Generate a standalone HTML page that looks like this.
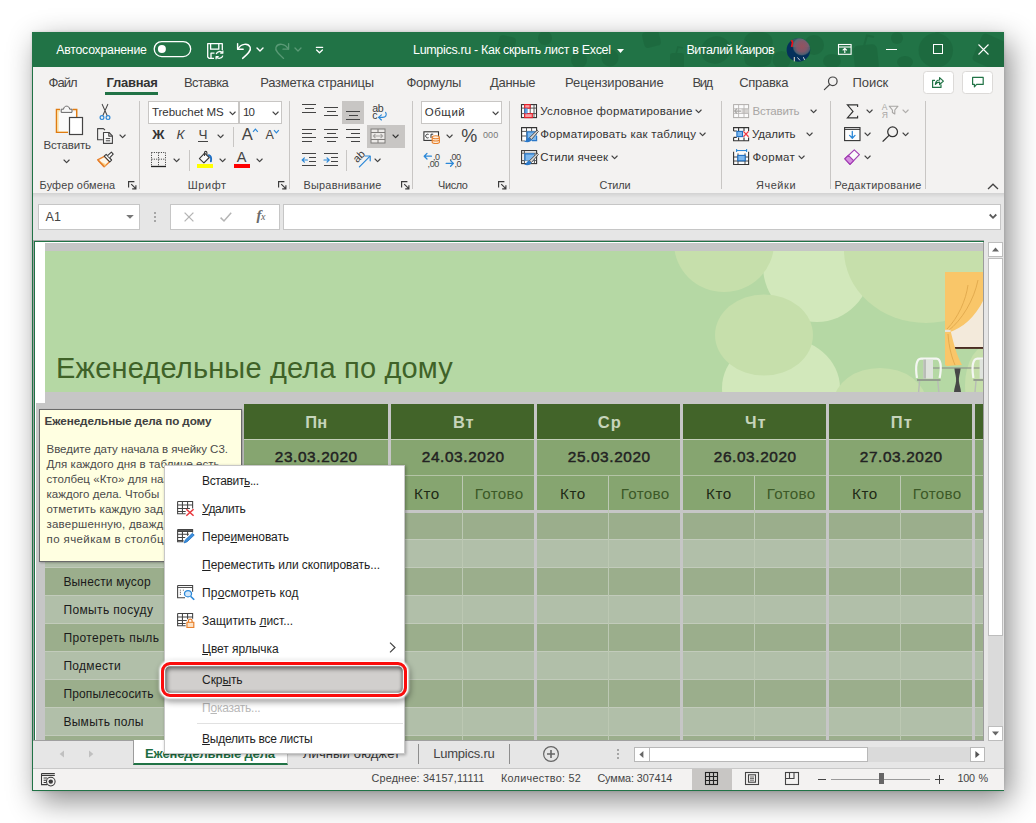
<!DOCTYPE html>
<html><head><meta charset="utf-8"><title>Excel</title>
<style>
html,body{margin:0;padding:0;}
body{width:1036px;height:823px;background:#fff;overflow:hidden;position:relative;font-family:"Liberation Sans",sans-serif;}
.a{position:absolute;box-sizing:border-box;margin:0;padding:0;}
u{text-decoration:underline;text-underline-offset:1px;}
</style></head><body>
<div class="a " style="left:32px;top:32px;width:972px;height:759px;background:#f3f2f1;box-shadow:6px 10px 28px rgba(0,0,0,.46),0 0 3px rgba(0,0,0,.14);"></div>
<div class="a " style="left:32px;top:32px;width:972px;height:35px;background:#217346;"></div>
<div class="a " style="left:33px;top:67px;width:971px;height:126px;background:#f3f2f1;"></div>
<div class="a " style="left:33px;top:193px;width:971px;height:48px;background:#e6e6e6;"></div>
<div class="a " style="left:33px;top:193px;width:971px;height:5px;background:linear-gradient(#d2d2d2,#e6e6e6);"></div>
<div class="a " style="left:33px;top:241px;width:971px;height:499px;background:#e6e6e6;"></div>
<div class="a " style="left:33px;top:740px;width:971px;height:28px;background:#e6e6e6;"></div>
<div class="a " style="left:33px;top:768px;width:971px;height:22px;background:#f3f2f1;border-top:1px solid #c8c8c8;"></div>
<div class="a " style="left:32px;top:67px;width:1px;height:724px;background:#217346;"></div>
<div class="a " style="left:32px;top:790px;width:972px;height:1px;background:#217346;"></div>
<svg class="a" style="left:32px;top:32px;" width="972" height="35" viewBox="0 0 972 35"><g fill="#1b663c" opacity=".62" transform="translate(-32 -32)">
<circle cx="935.8" cy="50.3" r="17.2"/><path d="M936 34 C938 31 942 30.5 944 32" stroke="#1b663c" stroke-width="2.5" fill="none"/>
<rect x="976" y="38" width="34" height="30" rx="4" transform="rotate(24 993 53)"/>
<rect x="854" y="45" width="24" height="26" rx="5" transform="rotate(-6 866 58)"/><path d="M864 46 L867 35.5 L874 37" stroke="#1b663c" stroke-width="2" fill="none"/>
<circle cx="814" cy="45" r="10"/><ellipse cx="832" cy="61" rx="9" ry="7"/>
<rect x="643" y="31" width="17" height="16" rx="4" transform="rotate(-14 651 39)"/>
<circle cx="610" cy="58" r="8.5"/><rect x="670" y="53" width="14" height="16" rx="3"/><path d="M676 54 L678 47 L683 48" stroke="#1b663c" stroke-width="1.6" fill="none"/>
<ellipse cx="715.7" cy="50" rx="15" ry="13.5" transform="rotate(-20 715.7 50)"/>
<path d="M744 46 C742 36 750 31 758 32 C768 31 775 37 772 46 C771 52 773 60 770 64 C764 68 750 68 746 64 C743 60 745 52 744 46 Z"/>
<circle cx="781.6" cy="60" r="9"/>
<rect x="498" y="36" width="17" height="17" rx="4" transform="rotate(12 506 45)"/><circle cx="579" cy="60" r="8"/>
<circle cx="545" cy="38" r="7"/>
<circle cx="897" cy="38" r="6"/><ellipse cx="905" cy="62" rx="8" ry="6"/>
</g></svg>
<div class="a" style="left:56.3px;top:44.39px;font-size:12.3px;line-height:1;color:#fff;white-space:nowrap;letter-spacing:-0.244px;">Автосохранение</div>
<svg class="a" style="left:152px;top:39px;" width="42" height="20" viewBox="0 0 42 20"><rect x="2.2" y="2.6" width="36.5" height="15" rx="7.5" fill="none" stroke="#fff" stroke-width="1.3"/><circle cx="9.9" cy="10.1" r="4" fill="#fff"/></svg>
<svg class="a" style="left:205px;top:41px;" width="20" height="20" viewBox="0 0 20 20"><g fill="none" stroke="#fff" stroke-width="1.3" stroke-linejoin="round">
<path d="M9 17.3 H4 L2.7 16 V2.7 H17.3 V9"/><path d="M5.6 2.7 V8.2 H13.8 V2.7"/><path d="M6 17 V12.2 H9.5"/>
<path d="M11.2 13.2 A3.6 3.6 0 0 1 17.6 12"/><path d="M17.8 14.6 A3.6 3.6 0 0 1 11.4 15.8"/>
<path d="M17.8 9.6 V12.2 H15.2"/><path d="M11.1 18.3 V15.7 H13.7"/></g></svg>
<svg class="a" style="left:235px;top:41px;" width="20" height="20" viewBox="0 0 20 20"><g fill="none" stroke="#fff" stroke-width="1.4" stroke-linecap="round" stroke-linejoin="round"><path d="M2.6 2.6 V8.2 H8.2"/><path d="M2.9 8 C6 2.6 13 1.6 15.2 6.2 C16.4 9.2 13.5 12.2 7.6 17.4"/></g></svg>
<svg class="a" style="left:255.5px;top:47.1px;" width="8" height="5" viewBox="0 0 8 5"><path d="M1 1 L4.0 4 L7 1" fill="none" stroke="#fff" stroke-width="1.4" stroke-linecap="round" stroke-linejoin="round"/></svg>
<svg class="a" style="left:272px;top:41px;" width="20" height="20" viewBox="0 0 20 20"><g fill="none" stroke="#5a9a76" stroke-width="1.3" stroke-linecap="round" stroke-linejoin="round"><path d="M16.6 2.6 V8.2 H11"/><path d="M16.3 8 C13.2 2.6 6.2 1.6 4 6.2 C2.8 9.2 5.7 12.2 11.6 17.4"/></g></svg>
<svg class="a" style="left:293.6px;top:47.1px;" width="8" height="5" viewBox="0 0 8 5"><path d="M1 1 L4.0 4 L7 1" fill="none" stroke="#5a9a76" stroke-width="1.3" stroke-linecap="round" stroke-linejoin="round"/></svg>
<svg class="a" style="left:314px;top:44px;" width="12" height="12" viewBox="0 0 12 12"><g fill="none" stroke="#fff" stroke-width="1.3" stroke-linecap="round" stroke-linejoin="round"><path d="M2.4 3.4 H8.6"/><path d="M2.6 6 L5.5 8.8 L8.4 6"/></g></svg>
<div class="a" style="left:413px;top:44.22px;font-size:12.5px;line-height:1;color:#fff;white-space:nowrap;letter-spacing:-0.320px;">Lumpics.ru - Как скрыть лист в Excel</div>
<svg class="a" style="left:616px;top:47.6px;" width="9" height="6" viewBox="0 0 9 6"><path d="M1 1 H8 L4.5 5 Z" fill="#fff"/></svg>
<div class="a" style="left:686.4px;top:44.22px;font-size:12.5px;line-height:1;color:#fff;white-space:nowrap;letter-spacing:-0.473px;">Виталий Каиров</div>
<svg class="a" style="left:786px;top:37px;" width="26" height="26" viewBox="0 0 26 26"><defs><radialGradient id="av" cx=".5" cy=".5" r=".5"><stop offset="0" stop-color="#94525e"/><stop offset=".55" stop-color="#85596a" stop-opacity=".95"/><stop offset=".85" stop-color="#6f6f78" stop-opacity=".7"/><stop offset="1" stop-color="#5e7a72" stop-opacity="0"/></radialGradient>
<clipPath id="avc"><circle cx="12.4" cy="13" r="11.8"/></clipPath></defs>
<circle cx="12.4" cy="13" r="11.8" fill="#04305b"/>
<g clip-path="url(#avc)"><path d="M6 0 H26 V10 H6 Z" fill="#5f8070" opacity=".55"/><circle cx="15.9" cy="9.4" r="9.6" fill="url(#av)"/></g>
<path d="M5.4 3.2 L6.6 5.4 L5.6 10" stroke="#f01018" stroke-width="1.7" fill="none"/>
<path d="M8.3 20 V24.4" stroke="#e8e2c8" stroke-width="1"/><path d="M11.4 20.4 L14 23.4" stroke="#c8d0dc" stroke-width="1"/><path d="M17.4 20.2 L18.6 23" stroke="#c8d0dc" stroke-width="1"/></svg>
<svg class="a" style="left:837px;top:43px;" width="16" height="13" viewBox="0 0 16 13"><g fill="none" stroke="#fff" stroke-width="1.1"><rect x="1.5" y="1.5" width="12.6" height="9.8"/><path d="M1.5 4 H14.1"/><path d="M7.8 10 V5.4 M5.7 7.4 L7.8 5.3 L9.9 7.4"/></g></svg>
<div class="a " style="left:886px;top:49px;width:11px;height:1px;background:#fff;"></div>
<div class="a " style="left:933px;top:44px;width:10px;height:10px;border:1px solid #fff;"></div>
<svg class="a" style="left:977px;top:43px;" width="13" height="13" viewBox="0 0 13 13"><path d="M1.5 1.5 L11.5 11.5 M11.5 1.5 L1.5 11.5" stroke="#fff" stroke-width="1.1"/></svg>
<div class="a" style="left:48.5px;top:75.80px;font-size:13px;line-height:1;color:#444;white-space:nowrap;letter-spacing:-0.954px;">Файл</div>
<div class="a" style="left:106.4px;top:75.80px;font-size:13px;line-height:1;color:#333;white-space:nowrap;letter-spacing:-0.228px;font-weight:bold;">Главная</div>
<div class="a " style="left:105px;top:92px;width:53px;height:3px;background:#217346;"></div>
<div class="a" style="left:184px;top:75.80px;font-size:13px;line-height:1;color:#444;white-space:nowrap;letter-spacing:-0.587px;">Вставка</div>
<div class="a" style="left:260.3px;top:75.80px;font-size:13px;line-height:1;color:#444;white-space:nowrap;letter-spacing:-0.265px;">Разметка страницы</div>
<div class="a" style="left:406.4px;top:75.80px;font-size:13px;line-height:1;color:#444;white-space:nowrap;letter-spacing:-0.262px;">Формулы</div>
<div class="a" style="left:490px;top:75.80px;font-size:13px;line-height:1;color:#444;white-space:nowrap;letter-spacing:-0.294px;">Данные</div>
<div class="a" style="left:565.1px;top:75.80px;font-size:13px;line-height:1;color:#444;white-space:nowrap;letter-spacing:-0.137px;">Рецензирование</div>
<div class="a" style="left:692.4px;top:75.80px;font-size:13px;line-height:1;color:#444;white-space:nowrap;letter-spacing:-1.409px;">Вид</div>
<div class="a" style="left:739.3px;top:75.80px;font-size:13px;line-height:1;color:#444;white-space:nowrap;letter-spacing:-0.316px;">Справка</div>
<svg class="a" style="left:822px;top:75px;" width="18" height="16" viewBox="0 0 18 16"><g fill="none" stroke="#444" stroke-width="1.2" stroke-linecap="round"><circle cx="10.8" cy="6.3" r="4.3"/><path d="M7.7 9.5 L2.4 14.6"/></g></svg>
<div class="a" style="left:852.6px;top:76.10px;font-size:13px;line-height:1;color:#444;white-space:nowrap;letter-spacing:-0.081px;">Поиск</div>
<div class="a " style="left:922.5px;top:70.5px;width:31px;height:23px;background:#fff;border:1px solid #dcdad8;border-radius:3.5px;"></div>
<div class="a " style="left:962.2px;top:70.5px;width:31px;height:23px;background:#fff;border:1px solid #dcdad8;border-radius:3.5px;"></div>
<svg class="a" style="left:930px;top:75px;" width="16" height="14" viewBox="0 0 16 14"><g fill="none" stroke="#217346" stroke-width="1.2" stroke-linejoin="round"><path d="M5 5.3 H2.6 V12.4 H11 V9.6"/><path d="M5.4 9.4 C5.6 6.6 7.3 5 9.6 5 V2.6 L13.4 6.1 L9.6 9.5 V7.2 C7.6 7.2 6.4 7.9 5.4 9.4 Z"/></g></svg>
<svg class="a" style="left:970px;top:75px;" width="16" height="14" viewBox="0 0 16 14"><path d="M2.6 2.4 H13.2 V9.4 H6.6 L4.4 11.9 V9.4 H2.6 Z" fill="none" stroke="#217346" stroke-width="1.2" stroke-linejoin="round"/></svg>
<svg class="a" style="left:54px;top:103px;" width="32" height="34" viewBox="0 0 32 34"><path d="M6 6.4 H2.5 V29.3 H14" fill="#fbfbfb" stroke="#e07c12" stroke-width="1.5"/><path d="M6 7.9 H4 V27.8 H14" fill="none" stroke="#fbdc92" stroke-width="1.3"/>
<path d="M18.5 6.4 H22.7 V14" fill="none" stroke="#e07c12" stroke-width="1.5"/>
<rect x="4.8" y="8.6" width="17" height="19.6" fill="#fbfbfb"/>
<path d="M7.2 9.4 V6.2 H9.6 C9.6 2.2 15.6 2.2 15.6 6.2 H18 V9.4 Z" fill="#f7f7f7" stroke="#666" stroke-width="1"/>
<rect x="15.5" y="14.5" width="13" height="17" fill="#fff" stroke="#444" stroke-width="1.2"/></svg>
<div class="a" style="left:43.4px;top:140.17px;font-size:11.5px;line-height:1;color:#444;white-space:nowrap;letter-spacing:-0.164px;">Вставить</div>
<svg class="a" style="left:62.800000000000004px;top:159.15px;" width="7.2" height="4.7" viewBox="0 0 7.2 4.7"><path d="M1 1 L3.6 3.7 L6.2 1" fill="none" stroke="#444" stroke-width="1.15" stroke-linecap="round" stroke-linejoin="round"/></svg>
<svg class="a" style="left:97px;top:103px;" width="16" height="18" viewBox="0 0 16 18"><g fill="none" stroke-linecap="round"><path d="M5.2 1.4 L10.2 12.6 M10.8 1.4 L5.8 12.6" stroke="#444" stroke-width="1.1"/>
<circle cx="5" cy="14.6" r="1.9" stroke="#2b88d8" stroke-width="1.2"/><circle cx="11" cy="14.6" r="1.9" stroke="#2b88d8" stroke-width="1.2"/></g></svg>
<svg class="a" style="left:96px;top:127px;" width="18" height="18" viewBox="0 0 18 18"><g fill="none" stroke="#444" stroke-width="1.1" stroke-linejoin="round"><path d="M6.8 12.8 H1.6 V1.6 H7.4 L9 3.2"/>
<path d="M7.5 5.5 H13 L16.4 8.9 V16.4 H7.5 Z" fill="#f9f9f9"/><path d="M12.8 5.6 V9.1 H16.3"/><path d="M9.8 11.6 H14.2 M9.8 13.8 H14.2" stroke-width="1"/></g></svg>
<svg class="a" style="left:118.9px;top:133.85px;" width="7.2" height="4.7" viewBox="0 0 7.2 4.7"><path d="M1 1 L3.6 3.7 L6.2 1" fill="none" stroke="#444" stroke-width="1.15" stroke-linecap="round" stroke-linejoin="round"/></svg>
<svg class="a" style="left:95px;top:150px;" width="20" height="19" viewBox="0 0 20 19"><g stroke-linejoin="round"><path d="M2.6 9.8 L9.4 6.4 L14.6 11.8 L9.2 16.8 Z" fill="#fdf6ea" stroke="#e8812d" stroke-width="1.3"/>
<path d="M5.4 11.6 L11.4 14.6 L9.2 16.4 Z" fill="#fbd488"/><path d="M3.2 10.2 L9.2 16.6" stroke="#e8812d" stroke-width="1.6" fill="none"/>
<path d="M9.2 6.2 L11.2 4.4 L16.6 10 L14.8 11.8 Z" fill="#fbfbfb" stroke="#3a3a3a" stroke-width="1.1"/>
<path d="M12.6 5.6 L16.4 2.2 L18.2 4.2 L14.6 7.8" fill="#fbfbfb" stroke="#3a3a3a" stroke-width="1.1"/></g></svg>
<div class="a" style="left:39.6px;top:179.57px;font-size:10.9px;line-height:1;color:#444;white-space:nowrap;letter-spacing:0.139px;">Буфер обмена</div>
<svg class="a" style="left:128px;top:180.9px;" width="9" height="9" viewBox="0 0 9 9"><g fill="none" stroke="#3a3a3a" stroke-width="1.15"><path d="M.6 6.4 V.6 H6.4"/><path d="M3.2 3.2 L7.6 7.4 M7.9 4.2 V7.9 H4.2"/></g></svg>
<div class="a " style="left:139px;top:101px;width:1px;height:88px;background:#c8c6c4;"></div>
<div class="a " style="left:148px;top:101px;width:91px;height:23px;background:#fff;border:1px solid #c8c6c4;"></div>
<div class="a " style="left:239px;top:101px;width:43px;height:23px;background:#fff;border:1px solid #c8c6c4;border-left:1px solid #c8c6c4;"></div>
<div class="a" style="left:151.9px;top:106.57px;font-size:11.5px;line-height:1;color:#333;white-space:nowrap;letter-spacing:0.000px;">Trebuchet MS</div>
<svg class="a" style="left:228.9px;top:111.05000000000001px;" width="7.2" height="4.7" viewBox="0 0 7.2 4.7"><path d="M1 1 L3.6 3.7 L6.2 1" fill="none" stroke="#444" stroke-width="1.15" stroke-linecap="round" stroke-linejoin="round"/></svg>
<div class="a" style="left:243px;top:106.57px;font-size:11.5px;line-height:1;color:#333;white-space:nowrap;letter-spacing:-0.992px;">10</div>
<svg class="a" style="left:271.9px;top:111.05000000000001px;" width="7.2" height="4.7" viewBox="0 0 7.2 4.7"><path d="M1 1 L3.6 3.7 L6.2 1" fill="none" stroke="#444" stroke-width="1.15" stroke-linecap="round" stroke-linejoin="round"/></svg>
<div class="a" style="left:152.2px;top:128.37px;font-size:13.5px;line-height:1;color:#333;white-space:nowrap;letter-spacing:1.398px;font-weight:bold;">Ж</div>
<div class="a" style="left:176.4px;top:128.37px;font-size:13.5px;line-height:1;color:#444;white-space:nowrap;letter-spacing:0.643px;font-style:italic;">К</div>
<div class="a" style="left:198.5px;top:128.37px;font-size:13.5px;line-height:1;color:#444;white-space:nowrap;letter-spacing:-0.798px;">Ч</div>
<div class="a " style="left:198px;top:141px;width:9.5px;height:1px;background:#444;"></div>
<svg class="a" style="left:216.70000000000002px;top:134.05px;" width="7.2" height="4.7" viewBox="0 0 7.2 4.7"><path d="M1 1 L3.6 3.7 L6.2 1" fill="none" stroke="#444" stroke-width="1.15" stroke-linecap="round" stroke-linejoin="round"/></svg>
<div class="a " style="left:233px;top:126.5px;width:1px;height:20.5px;background:#c8c6c4;"></div>
<div class="a" style="left:241.8px;top:125.93px;font-size:16.5px;line-height:1;color:#444;white-space:nowrap;letter-spacing:0.194px;">A</div>
<svg class="a" style="left:251.5px;top:128px;" width="7" height="5" viewBox="0 0 7 5"><path d="M1 3.8 L3.4 1.2 L5.8 3.8" fill="none" stroke="#2b88d8" stroke-width="1.2"/></svg>
<div class="a" style="left:265.4px;top:129.32px;font-size:12.5px;line-height:1;color:#444;white-space:nowrap;letter-spacing:0.262px;">A</div>
<svg class="a" style="left:273px;top:128.5px;" width="7" height="5" viewBox="0 0 7 5"><path d="M1 1.2 L3.4 3.8 L5.8 1.2" fill="none" stroke="#2b88d8" stroke-width="1.2"/></svg>
<svg class="a" style="left:150px;top:151px;" width="17" height="17" viewBox="0 0 17 17"><g stroke="#333" stroke-width="1" stroke-dasharray="1 1.35" fill="none"><path d="M1.5 1.5 H15.5 M1.5 1.5 V15 M15.5 1.5 V15 M8.5 1.5 V15 M1.5 8.2 H15.5"/></g><path d="M1 15.5 H16" stroke="#222" stroke-width="1.3"/></svg>
<svg class="a" style="left:172.70000000000002px;top:158.15px;" width="7.2" height="4.7" viewBox="0 0 7.2 4.7"><path d="M1 1 L3.6 3.7 L6.2 1" fill="none" stroke="#444" stroke-width="1.15" stroke-linecap="round" stroke-linejoin="round"/></svg>
<div class="a " style="left:189px;top:150px;width:1px;height:20.5px;background:#c8c6c4;"></div>
<svg class="a" style="left:197px;top:150px;" width="18" height="15" viewBox="0 0 18 15"><g fill="none" stroke-linejoin="round"><path d="M2.4 8.7 L7.6 3.2 L12.3 7.5 L6.9 12.9 Z" fill="#fbfbfb" stroke="#3a3a3a" stroke-width="1.1"/>
<path d="M7.5 6 V2.8 C7.5 .9 9.9 .9 9.9 2.8 V5.2" stroke="#3a3a3a" stroke-width="1.1"/>
<path d="M11.8 5.2 C13.8 6 14.5 8.6 13.9 11.4" stroke="#1f6fc3" stroke-width="1.9" stroke-linecap="round"/></g></svg>
<div class="a " style="left:197px;top:164px;width:16px;height:4px;background:#ffff00;"></div>
<svg class="a" style="left:218.6px;top:158.15px;" width="7.2" height="4.7" viewBox="0 0 7.2 4.7"><path d="M1 1 L3.6 3.7 L6.2 1" fill="none" stroke="#444" stroke-width="1.15" stroke-linecap="round" stroke-linejoin="round"/></svg>
<div class="a" style="left:236.8px;top:150.33px;font-size:14.5px;line-height:1;color:#444;white-space:nowrap;letter-spacing:1.228px;">A</div>
<div class="a " style="left:234px;top:164px;width:16px;height:4px;background:#ff0000;"></div>
<svg class="a" style="left:255.89999999999998px;top:158.15px;" width="7.2" height="4.7" viewBox="0 0 7.2 4.7"><path d="M1 1 L3.6 3.7 L6.2 1" fill="none" stroke="#444" stroke-width="1.15" stroke-linecap="round" stroke-linejoin="round"/></svg>
<div class="a" style="left:187.7px;top:179.57px;font-size:10.9px;line-height:1;color:#444;white-space:nowrap;letter-spacing:0.610px;">Шрифт</div>
<svg class="a" style="left:277.8px;top:180.9px;" width="9" height="9" viewBox="0 0 9 9"><g fill="none" stroke="#3a3a3a" stroke-width="1.15"><path d="M.6 6.4 V.6 H6.4"/><path d="M3.2 3.2 L7.6 7.4 M7.9 4.2 V7.9 H4.2"/></g></svg>
<div class="a " style="left:289px;top:101px;width:1px;height:88px;background:#c8c6c4;"></div>
<div class="a " style="left:302px;top:104.05px;width:14px;height:1.1px;background:#444;"></div>
<div class="a " style="left:304.5px;top:107.95px;width:9px;height:1.1px;background:#444;"></div>
<div class="a " style="left:302px;top:111.85000000000001px;width:14px;height:1.1px;background:#444;"></div>
<div class="a " style="left:324px;top:106.85000000000001px;width:14px;height:1.1px;background:#444;"></div>
<div class="a " style="left:326.5px;top:110.75px;width:9px;height:1.1px;background:#444;"></div>
<div class="a " style="left:324px;top:114.65px;width:14px;height:1.1px;background:#444;"></div>
<div class="a " style="left:342px;top:101px;width:22px;height:23px;background:#c8c6c4;"></div>
<div class="a " style="left:346px;top:110.75px;width:14px;height:1.1px;background:#444;"></div>
<div class="a " style="left:348.5px;top:114.65px;width:9px;height:1.1px;background:#444;"></div>
<div class="a " style="left:346px;top:118.65px;width:14px;height:1.1px;background:#444;"></div>
<div class="a" style="left:372.2px;top:102.63px;font-size:10.6px;line-height:1;color:#3a3a3a;white-space:nowrap;letter-spacing:-0.391px;">ab</div>
<div class="a" style="left:372.2px;top:110.03px;font-size:10.6px;line-height:1;color:#3a3a3a;white-space:nowrap;">c</div>
<svg class="a" style="left:377px;top:111px;" width="11" height="10" viewBox="0 0 11 10"><g fill="none" stroke="#2b88d8" stroke-width="1.15" stroke-linecap="round" stroke-linejoin="round"><path d="M8.6 1.4 C10.2 4 8.8 6.4 5.6 6.4 H1.8"/><path d="M4.4 3.8 L1.6 6.4 L4.4 9"/></g></svg>
<div class="a " style="left:302px;top:128.75px;width:14px;height:1.1px;background:#444;"></div>
<div class="a " style="left:324px;top:128.75px;width:14px;height:1.1px;background:#444;"></div>
<div class="a " style="left:346px;top:128.75px;width:14px;height:1.1px;background:#444;"></div>
<div class="a " style="left:302px;top:132.75px;width:9.5px;height:1.1px;background:#444;"></div>
<div class="a " style="left:326.5px;top:132.75px;width:9px;height:1.1px;background:#444;"></div>
<div class="a " style="left:350.5px;top:132.75px;width:9.5px;height:1.1px;background:#444;"></div>
<div class="a " style="left:302px;top:136.64999999999998px;width:14px;height:1.1px;background:#444;"></div>
<div class="a " style="left:324px;top:136.64999999999998px;width:14px;height:1.1px;background:#444;"></div>
<div class="a " style="left:346px;top:136.64999999999998px;width:14px;height:1.1px;background:#444;"></div>
<div class="a " style="left:302px;top:140.64999999999998px;width:9.5px;height:1.1px;background:#444;"></div>
<div class="a " style="left:326.5px;top:140.64999999999998px;width:9px;height:1.1px;background:#444;"></div>
<div class="a " style="left:350.5px;top:140.64999999999998px;width:9.5px;height:1.1px;background:#444;"></div>
<div class="a " style="left:367px;top:125px;width:38px;height:23px;background:#c8c6c4;"></div>
<svg class="a" style="left:369.5px;top:127.5px;" width="16" height="16" viewBox="0 0 16 16"><g fill="none" stroke="#7e7c7a" stroke-width="1"><rect x="1" y="1" width="14" height="14" fill="#ebe9e7"/><path d="M1 4.5 H15 M1 11.5 H15 M8 1 V4.5 M8 11.5 V15"/>
<path d="M3.4 8 H12.6 M5.4 6 L3.4 8 L5.4 10 M10.6 6 L12.6 8 L10.6 10" stroke="#a8a6a4" stroke-width="1.1"/></g></svg>
<svg class="a" style="left:391.7px;top:134.25px;" width="7.2" height="4.7" viewBox="0 0 7.2 4.7"><path d="M1 1 L3.6 3.7 L6.2 1" fill="none" stroke="#333" stroke-width="1.15" stroke-linecap="round" stroke-linejoin="round"/></svg>
<div class="a " style="left:302px;top:152.85px;width:14px;height:1.1px;background:#444;"></div>
<div class="a " style="left:309px;top:156.95px;width:7px;height:1.1px;background:#444;"></div>
<div class="a " style="left:309px;top:161.04999999999998px;width:7px;height:1.1px;background:#444;"></div>
<div class="a " style="left:302px;top:165.14999999999998px;width:14px;height:1.1px;background:#444;"></div>
<div class="a " style="left:324px;top:152.85px;width:14px;height:1.1px;background:#444;"></div>
<div class="a " style="left:331px;top:156.95px;width:7px;height:1.1px;background:#444;"></div>
<div class="a " style="left:331px;top:161.04999999999998px;width:7px;height:1.1px;background:#444;"></div>
<div class="a " style="left:324px;top:165.14999999999998px;width:14px;height:1.1px;background:#444;"></div>
<svg class="a" style="left:301px;top:155.5px;" width="8" height="8" viewBox="0 0 8 8"><g fill="none" stroke="#2b88d8" stroke-width="1.2" stroke-linecap="round" stroke-linejoin="round"><path d="M1.4 4 H6.4 M3.4 1.8 L1.2 4 L3.4 6.2"/></g></svg>
<svg class="a" style="left:323px;top:155.5px;" width="8" height="8" viewBox="0 0 8 8"><g fill="none" stroke="#2b88d8" stroke-width="1.2" stroke-linecap="round" stroke-linejoin="round"><path d="M1 4 H6 M4 1.8 L6.2 4 L4 6.2"/></g></svg>
<div class="a " style="left:346px;top:150px;width:1px;height:20.5px;background:#c8c6c4;"></div>
<div class="a" style="left:353.4px;top:151.2px;font-size:11px;line-height:1;color:#3a3a3a;transform:rotate(-45deg);transform-origin:50% 50%;letter-spacing:-.2px;">ab</div>
<svg class="a" style="left:358px;top:153px;" width="14" height="15" viewBox="0 0 14 15"><g fill="none" stroke="#2b88d8" stroke-width="1.2" stroke-linecap="round" stroke-linejoin="round"><path d="M1.4 13.8 L11.8 3.4"/><path d="M7.4 3 L12.2 3 L12.2 7.8"/></g></svg>
<svg class="a" style="left:374.0px;top:158.15px;" width="7.2" height="4.7" viewBox="0 0 7.2 4.7"><path d="M1 1 L3.6 3.7 L6.2 1" fill="none" stroke="#444" stroke-width="1.15" stroke-linecap="round" stroke-linejoin="round"/></svg>
<div class="a" style="left:303.4px;top:179.57px;font-size:10.9px;line-height:1;color:#444;white-space:nowrap;letter-spacing:0.270px;">Выравнивание</div>
<svg class="a" style="left:401px;top:180.9px;" width="9" height="9" viewBox="0 0 9 9"><g fill="none" stroke="#3a3a3a" stroke-width="1.15"><path d="M.6 6.4 V.6 H6.4"/><path d="M3.2 3.2 L7.6 7.4 M7.9 4.2 V7.9 H4.2"/></g></svg>
<div class="a " style="left:412px;top:101px;width:1px;height:88px;background:#c8c6c4;"></div>
<div class="a " style="left:421px;top:101px;width:81px;height:23px;background:#fff;border:1px solid #c8c6c4;"></div>
<div class="a" style="left:424.7px;top:106.57px;font-size:11.5px;line-height:1;color:#333;white-space:nowrap;letter-spacing:0.565px;">Общий</div>
<svg class="a" style="left:492.0px;top:111.05000000000001px;" width="7.2" height="4.7" viewBox="0 0 7.2 4.7"><path d="M1 1 L3.6 3.7 L6.2 1" fill="none" stroke="#444" stroke-width="1.15" stroke-linecap="round" stroke-linejoin="round"/></svg>
<svg class="a" style="left:422px;top:130px;" width="20" height="15" viewBox="0 0 20 15"><rect x="1.9" y="1.8" width="14.6" height="8.6" fill="#fdfdfd" stroke="#333" stroke-width="1.1"/>
<path d="M6.6 4.4 C4.6 3.6 3.6 5 3.7 6.1 C3.8 7.6 5.2 8.4 6.6 7.7" fill="none" stroke="#333" stroke-width="1"/><path d="M9 8 V4.2 H11.2" fill="none" stroke="#333" stroke-width="1"/>
<g fill="#fdf1e1" stroke="#e8812d" stroke-width="1.1"><path d="M10.2 7.2 V12.2 C10.2 13.9 17.4 13.9 17.4 12.2 V7.2"/><ellipse cx="13.8" cy="7.2" rx="3.6" ry="1.5"/><path d="M10.2 9.8 C10.2 11.4 17.4 11.4 17.4 9.8" fill="none"/></g></svg>
<svg class="a" style="left:445.79999999999995px;top:134.05px;" width="7.2" height="4.7" viewBox="0 0 7.2 4.7"><path d="M1 1 L3.6 3.7 L6.2 1" fill="none" stroke="#444" stroke-width="1.15" stroke-linecap="round" stroke-linejoin="round"/></svg>
<div class="a" style="left:461.3px;top:127.36px;font-size:18px;line-height:1;color:#444;white-space:nowrap;letter-spacing:-0.605px;">%</div>
<div class="a" style="left:482.9px;top:131.38px;font-size:9px;line-height:1;color:#777;white-space:nowrap;letter-spacing:0.192px;">000</div>
<svg class="a" style="left:422px;top:150px;" width="20" height="19" viewBox="0 0 20 19"><g fill="none" stroke="#2b88d8" stroke-width="1.3" stroke-linecap="round" stroke-linejoin="round"><path d="M2.2 6.2 H9.4 M5 3.4 L2.2 6.2 L5 9"/></g></svg>
<div class="a" style="left:433px;top:152.58px;font-size:9px;line-height:1;color:#444;white-space:nowrap;letter-spacing:-.4px;">,0</div>
<div class="a" style="left:427.6px;top:159.78px;font-size:9px;line-height:1;color:#444;white-space:nowrap;letter-spacing:-.4px;">,00</div>
<svg class="a" style="left:444px;top:150px;" width="20" height="19" viewBox="0 0 20 19"><g fill="none" stroke="#2b88d8" stroke-width="1.3" stroke-linecap="round" stroke-linejoin="round"><path d="M2.2 13.4 H9.4 M6.6 10.6 L9.4 13.4 L6.6 16.2"/></g></svg>
<div class="a" style="left:449.4px;top:152.58px;font-size:9px;line-height:1;color:#444;white-space:nowrap;letter-spacing:-.4px;">,00</div>
<div class="a" style="left:454.4px;top:159.78px;font-size:9px;line-height:1;color:#444;white-space:nowrap;letter-spacing:-.4px;">,0</div>
<div class="a" style="left:438.1px;top:179.57px;font-size:10.9px;line-height:1;color:#444;white-space:nowrap;letter-spacing:-0.387px;">Число</div>
<svg class="a" style="left:498px;top:180.9px;" width="9" height="9" viewBox="0 0 9 9"><g fill="none" stroke="#3a3a3a" stroke-width="1.15"><path d="M.6 6.4 V.6 H6.4"/><path d="M3.2 3.2 L7.6 7.4 M7.9 4.2 V7.9 H4.2"/></g></svg>
<div class="a " style="left:509px;top:101px;width:1px;height:88px;background:#c8c6c4;"></div>
<svg class="a" style="left:520px;top:103px;" width="18" height="16" viewBox="0 0 18 16"><rect x="1.5" y="1.6" width="15" height="13" fill="#fff" stroke="#333" stroke-width="1.1"/>
<path d="M1.5 5.1 H16.5 M1.5 10.6 H16.5 M4.6 1.6 V14.6 M10.2 1.6 V14.6 M14 1.6 V14.6" stroke="#444" stroke-width=".9" fill="none"/>
<rect x="4.7" y="1.6" width="5.4" height="3.5" fill="#f6a0a6" stroke="#e8202a" stroke-width="1.1"/>
<rect x="4.7" y="10.6" width="7.6" height="4" fill="#f6a0a6" stroke="#e8202a" stroke-width="1.1"/>
<rect x="4.5" y="5.4" width="3" height="5" fill="#2b7cd3"/><rect x="5.6" y="5.6" width="1" height="4.8" fill="#8cc0f0"/></svg>
<div class="a" style="left:540.3px;top:106.07px;font-size:11.5px;line-height:1;color:#333;white-space:nowrap;letter-spacing:0.259px;">Условное форматирование</div>
<svg class="a" style="left:695.1px;top:109.05000000000001px;" width="7.2" height="4.7" viewBox="0 0 7.2 4.7"><path d="M1 1 L3.6 3.7 L6.2 1" fill="none" stroke="#444" stroke-width="1.15" stroke-linecap="round" stroke-linejoin="round"/></svg>
<svg class="a" style="left:520px;top:125.8px;" width="20" height="18" viewBox="0 0 20 18"><path d="M16.6 1.6 H1.6 V14.6 H5" fill="#fff" stroke="#333" stroke-width="1.1"/><rect x="1.6" y="1.6" width="15" height="13" fill="#fff"/>
<path d="M1.6 1.6 H16.6 V6 M1.6 1.6 V14.6" fill="none" stroke="#333" stroke-width="1.1"/>
<path d="M1.6 5.4 H16.6 M1.6 10 H6.5 M6.5 1.6 V14.6 M11.6 1.6 V5.4" stroke="#444" stroke-width=".9" fill="none"/>
<rect x="6.6" y="5.4" width="10.4" height="9.6" fill="#7db8ee"/><path d="M7.2 14.4 V6 H16.4" fill="none" stroke="#2b78c8" stroke-width="1.2"/><path d="M12 14.6 H16.6 V10" fill="none" stroke="#2b78c8" stroke-width="1.2"/><path d="M17.2 4.2 L9.4 11.8 L11.4 13.6 L18.4 5.4 Z" fill="#dcdad8" stroke="#444" stroke-width=".9" stroke-linejoin="round"/>
<path d="M9.2 11.8 C6.8 11.6 7.2 14.4 4 15.6 C8 17 11 15.8 11.5 13.7 Z" fill="#2b78c8"/></svg>
<div class="a" style="left:540.3px;top:129.17px;font-size:11.5px;line-height:1;color:#333;white-space:nowrap;letter-spacing:0.249px;">Форматировать как таблицу</div>
<svg class="a" style="left:698.8px;top:132.25px;" width="7.2" height="4.7" viewBox="0 0 7.2 4.7"><path d="M1 1 L3.6 3.7 L6.2 1" fill="none" stroke="#444" stroke-width="1.15" stroke-linecap="round" stroke-linejoin="round"/></svg>
<svg class="a" style="left:520px;top:148.8px;" width="20" height="18" viewBox="0 0 20 18"><rect x="1.6" y="1.6" width="15" height="13" fill="#fff" stroke="#333" stroke-width="1.1"/>
<path d="M1.6 4.2 H16.6 M4.4 1.6 V14.6 M14.4 4.2 V14.6 M1.6 11.6 H16.6" stroke="#444" stroke-width=".9" fill="none"/>
<rect x="4.6" y="4.4" width="9.8" height="7.2" fill="#7db8ee"/><path d="M5 11.4 V4.8 H14.2" fill="none" stroke="#2b78c8" stroke-width="1.2"/><path d="M17.2 4.2 L9.4 11.8 L11.4 13.6 L18.4 5.4 Z" fill="#dcdad8" stroke="#444" stroke-width=".9" stroke-linejoin="round"/>
<path d="M9.2 11.8 C6.8 11.6 7.2 14.4 4 15.6 C8 17 11 15.8 11.5 13.7 Z" fill="#2b78c8"/></svg>
<div class="a" style="left:540.3px;top:151.87px;font-size:11.5px;line-height:1;color:#333;white-space:nowrap;letter-spacing:0.143px;">Стили ячеек</div>
<svg class="a" style="left:611.0px;top:155.05px;" width="7.2" height="4.7" viewBox="0 0 7.2 4.7"><path d="M1 1 L3.6 3.7 L6.2 1" fill="none" stroke="#444" stroke-width="1.15" stroke-linecap="round" stroke-linejoin="round"/></svg>
<div class="a" style="left:599.6px;top:179.57px;font-size:10.9px;line-height:1;color:#444;white-space:nowrap;letter-spacing:-0.076px;">Стили</div>
<div class="a " style="left:721px;top:101px;width:1px;height:88px;background:#c8c6c4;"></div>
<svg class="a" style="left:731.5px;top:103px;" width="19" height="16" viewBox="0 0 19 16"><rect x="1.6" y="1.6" width="15" height="13" fill="#fbfbfb" stroke="#b0aeac" stroke-width="1"/>
<rect x="9.6" y="5.8" width="7" height="4.6" fill="#d6d4d2"/>
<path d="M1.6 5.8 H16.6 M1.6 10.4 H16.6 M6.6 1.6 V14.6 M12 1.6 V14.6" stroke="#b8b6b4" stroke-width=".9" fill="none"/>
<path d="M2.6 8.1 H9.2 M5 5.7 L2.6 8.1 L5 10.5" stroke="#a8a6a4" stroke-width="1.1" fill="none"/></svg>
<div class="a" style="left:752.5px;top:106.07px;font-size:11.5px;line-height:1;color:#a8a6a4;white-space:nowrap;letter-spacing:-0.235px;">Вставить</div>
<svg class="a" style="left:809.8px;top:109.05000000000001px;" width="7.2" height="4.7" viewBox="0 0 7.2 4.7"><path d="M1 1 L3.6 3.7 L6.2 1" fill="none" stroke="#444" stroke-width="1.15" stroke-linecap="round" stroke-linejoin="round"/></svg>
<svg class="a" style="left:731.5px;top:126px;" width="19" height="16" viewBox="0 0 19 16"><rect x="1.6" y="1.6" width="15" height="13.2" fill="#fbfbfb"/>
<g fill="none" stroke="#333" stroke-width="1.1"><path d="M1.6 5 V1.6 H16.6 V5"/><path d="M1.6 11.4 V14.8 H16.6 V11.4"/><path d="M6.6 1.6 V5 M12 1.6 V5 M6.6 11.4 V14.8 M12 11.4 V14.8 M1.6 5 H4.8 M1.6 11.4 H4.8"/></g>
<rect x="4.9" y="5.4" width="5.6" height="5.2" fill="#7db8ee" stroke="#1f6fc3" stroke-width="1.1"/>
<path d="M11.4 5.4 L16.6 10.8 M16.6 5.4 L11.4 10.8" stroke="#ee3a44" stroke-width="1.3" fill="none"/></svg>
<div class="a" style="left:752px;top:129.27px;font-size:11.5px;line-height:1;color:#333;white-space:nowrap;letter-spacing:-0.051px;">Удалить</div>
<svg class="a" style="left:805.6px;top:132.25px;" width="7.2" height="4.7" viewBox="0 0 7.2 4.7"><path d="M1 1 L3.6 3.7 L6.2 1" fill="none" stroke="#444" stroke-width="1.15" stroke-linecap="round" stroke-linejoin="round"/></svg>
<svg class="a" style="left:731.5px;top:148px;" width="19" height="18" viewBox="0 0 19 18"><path d="M4.6 2.5 H14.6 M4.6 1 V4 M14.6 1 V4" stroke="#2b88d8" stroke-width="1.1" fill="none"/>
<rect x="1.6" y="4" width="15" height="12.5" fill="#fbfbfb"/>
<g fill="none" stroke="#333" stroke-width="1.1"><path d="M1.6 3.8 V16.5 H16.6 V3.8"/><path d="M6 5.4 V16.5 M13 5.4 V16.5 M1.6 9 H16.6 M1.6 13 H16.6" stroke-width=".9"/></g>
<rect x="5.8" y="7.4" width="7.4" height="5.4" fill="#7db8ee" stroke="#1f6fc3" stroke-width="1.1"/></svg>
<div class="a" style="left:752.5px;top:151.97px;font-size:11.5px;line-height:1;color:#333;white-space:nowrap;letter-spacing:0.290px;">Формат</div>
<svg class="a" style="left:797.9px;top:155.05px;" width="7.2" height="4.7" viewBox="0 0 7.2 4.7"><path d="M1 1 L3.6 3.7 L6.2 1" fill="none" stroke="#444" stroke-width="1.15" stroke-linecap="round" stroke-linejoin="round"/></svg>
<div class="a" style="left:755.9px;top:179.57px;font-size:10.9px;line-height:1;color:#444;white-space:nowrap;letter-spacing:0.628px;">Ячейки</div>
<div class="a " style="left:830px;top:101px;width:1px;height:88px;background:#c8c6c4;"></div>
<svg class="a" style="left:844.5px;top:102.6px;" width="15" height="17" viewBox="0 0 15 17"><path d="M12.6 4 V1.9 H2.4 L8 8.4 L2.4 14.9 H12.6 V12.8" fill="none" stroke="#333" stroke-width="1.15" stroke-linejoin="miter"/></svg>
<svg class="a" style="left:865.5px;top:109.05000000000001px;" width="7.2" height="4.7" viewBox="0 0 7.2 4.7"><path d="M1 1 L3.6 3.7 L6.2 1" fill="none" stroke="#444" stroke-width="1.15" stroke-linecap="round" stroke-linejoin="round"/></svg>
<div class="a" style="left:881.8px;top:103.20px;font-size:8.5px;line-height:1;color:#a8a6a4;white-space:nowrap;">А</div>
<div class="a" style="left:881.8px;top:111.00px;font-size:8.5px;line-height:1;color:#a8a6a4;white-space:nowrap;">Я</div>
<svg class="a" style="left:888px;top:105.4px;" width="12" height="11" viewBox="0 0 12 11"><path d="M1.2 1.2 H10 L6.8 5 V9 L4.4 7.6 V5 Z" fill="none" stroke="#a8a6a4" stroke-width="1.1" stroke-linejoin="round"/></svg>
<svg class="a" style="left:901.9px;top:109.05000000000001px;" width="7.2" height="4.7" viewBox="0 0 7.2 4.7"><path d="M1 1 L3.6 3.7 L6.2 1" fill="none" stroke="#b0aeac" stroke-width="1.15" stroke-linecap="round" stroke-linejoin="round"/></svg>
<svg class="a" style="left:843px;top:126px;" width="19" height="16" viewBox="0 0 19 16"><rect x="1.6" y="1.6" width="15.4" height="13" fill="#fdfdfd" stroke="#333" stroke-width="1.1"/><path d="M1.6 3.4 H17" stroke="#333" stroke-width="1"/>
<path d="M9.3 5.4 V12 M6.6 9.4 L9.3 12.2 L12 9.4" fill="none" stroke="#2b88d8" stroke-width="1.3" stroke-linecap="round" stroke-linejoin="round"/></svg>
<svg class="a" style="left:863.8px;top:132.25px;" width="7.2" height="4.7" viewBox="0 0 7.2 4.7"><path d="M1 1 L3.6 3.7 L6.2 1" fill="none" stroke="#444" stroke-width="1.15" stroke-linecap="round" stroke-linejoin="round"/></svg>
<svg class="a" style="left:881px;top:125px;" width="19" height="18" viewBox="0 0 19 18"><g fill="none" stroke="#333" stroke-width="1.25" stroke-linecap="round"><circle cx="11.6" cy="6.8" r="4.9"/><path d="M8 10.4 L2 16.2"/></g></svg>
<svg class="a" style="left:901.9px;top:132.25px;" width="7.2" height="4.7" viewBox="0 0 7.2 4.7"><path d="M1 1 L3.6 3.7 L6.2 1" fill="none" stroke="#444" stroke-width="1.15" stroke-linecap="round" stroke-linejoin="round"/></svg>
<svg class="a" style="left:842.5px;top:148px;" width="19" height="18" viewBox="0 0 19 18"><g stroke="#a33fb4" stroke-width="1.2" stroke-linejoin="round"><path d="M11.3 1.9 L16.4 6.6 L7 16.3 L1.9 10.8 Z" fill="#fbfbfb"/><path d="M5.4 7.4 L10.6 12.7 L7 16.3 L1.9 10.8 Z" fill="#d690e0"/></g></svg>
<svg class="a" style="left:863.8px;top:155.05px;" width="7.2" height="4.7" viewBox="0 0 7.2 4.7"><path d="M1 1 L3.6 3.7 L6.2 1" fill="none" stroke="#444" stroke-width="1.15" stroke-linecap="round" stroke-linejoin="round"/></svg>
<div class="a" style="left:834.5px;top:179.57px;font-size:10.9px;line-height:1;color:#444;white-space:nowrap;letter-spacing:0.305px;">Редактирование</div>
<div class="a " style="left:925px;top:101px;width:1px;height:88px;background:#c8c6c4;"></div>
<svg class="a" style="left:985.5px;top:181.5px;" width="14" height="9" viewBox="0 0 14 9"><path d="M2 7 L7 2.2 L12 7" fill="none" stroke="#444" stroke-width="1.3"/></svg>
<div class="a " style="left:38px;top:204px;width:102px;height:25.5px;background:#fff;border:1px solid #c6c6c6;"></div>
<div class="a" style="left:45.4px;top:210.82px;font-size:12.5px;line-height:1;color:#444;white-space:nowrap;letter-spacing:0.210px;">A1</div>
<svg class="a" style="left:125px;top:213.5px;" width="10" height="6" viewBox="0 0 10 6"><path d="M1.2 1 H8.8 L5 4.8 Z" fill="#777"/></svg>
<div class="a " style="left:154px;top:212px;width:2px;height:2px;background:#a6a6a6;"></div>
<div class="a " style="left:154px;top:216px;width:2px;height:2px;background:#a6a6a6;"></div>
<div class="a " style="left:154px;top:220px;width:2px;height:2px;background:#a6a6a6;"></div>
<div class="a " style="left:170px;top:204px;width:110px;height:25.5px;background:#fff;border:1px solid #c6c6c6;"></div>
<svg class="a" style="left:183px;top:210.5px;" width="12" height="12" viewBox="0 0 12 12"><path d="M1.6 1.6 L10.4 10.4 M10.4 1.6 L1.6 10.4" stroke="#b4b4b4" stroke-width="1.3"/></svg>
<svg class="a" style="left:218.5px;top:210.5px;" width="14" height="12" viewBox="0 0 14 12"><path d="M1.6 6.6 L5 10 L12.2 1.8" fill="none" stroke="#b4b4b4" stroke-width="1.5"/></svg>
<div class="a" style="left:256.4px;top:207.6px;font-family:'Liberation Serif',serif;font-style:italic;font-size:15px;line-height:1;color:#5a5a5a;letter-spacing:-.4px;"><span style="font-weight:bold;color:#6a6a6a">f</span><span style="font-size:10px;">x</span></div>
<div class="a " style="left:283px;top:204px;width:717.5px;height:25.5px;background:#fff;border:1px solid #c6c6c6;"></div>
<svg class="a" style="left:987.5px;top:213px;" width="10" height="7" viewBox="0 0 10 7"><path d="M1.7 1.5 L5 4.8 L8.3 1.5" fill="none" stroke="#5a5a5a" stroke-width="1.8"/></svg>
<div class="a " style="left:33px;top:240px;width:951px;height:1px;background:#a8a8a8;"></div>
<div class="a " style="left:33px;top:241px;width:1px;height:499px;background:#a0a0a0;"></div>
<div class="a " style="left:35px;top:242px;width:949px;height:498px;background:#c6c6c6;"></div>
<div class="a " style="left:35px;top:242px;width:949px;height:1.2px;background:#fff;"></div>
<div class="a " style="left:35px;top:242px;width:10px;height:161px;background:#fff;"></div>
<div class="a " style="left:35px;top:403px;width:1px;height:337px;background:#fff;"></div>
<div class="a " style="left:34px;top:241px;width:950px;height:1.3px;background:#217346;"></div>
<div class="a " style="left:34px;top:241px;width:1.2px;height:499px;background:#217346;"></div>
<div class="a" style="left:45px;top:251px;width:939px;height:141px;background:#b5d8a4;overflow:hidden;">
<svg class="a" style="left:0;top:0" width="939" height="141" viewBox="45 251 939 141">
<ellipse cx="781" cy="388" rx="59" ry="51" fill="#d2e8bb"/>
<ellipse cx="817" cy="266" rx="54" ry="56" fill="#d2e8bb"/>
<ellipse cx="724" cy="243" rx="50" ry="49" fill="#c6dfab"/>
<ellipse cx="926" cy="250" rx="82" ry="73" fill="#c6dfab"/>
<ellipse cx="764" cy="335" rx="49" ry="40.5" fill="#c6dfab"/>
<ellipse cx="880" cy="402" rx="46" ry="34" fill="#c6dfab"/>
<ellipse cx="992" cy="385" rx="27" ry="42" fill="#c6dfab"/>
<!-- window & curtain -->
<rect x="949" y="290" width="41" height="57.6" fill="#f3eadb"/>
<rect x="954.6" y="347" width="32" height="1.9" fill="#4a2c22"/>
<path d="M945 272 H984 V299 C975 318 962 328 949 332.6 L949 366 L945 365 Z" fill="#f9c669"/>
<path d="M945.6 331 H950.6 C954 345 957 356 962 365 L946 366 Z" fill="#f9c669"/>
<path d="M978 280 C974 300 962 320 948 331 M968 285 C966 300 958 318 947 329 M948 334 C949 348 952 358 955 365" fill="none" stroke="#e0a84c" stroke-width=".9"/>
<rect x="945" y="329.8" width="5.6" height="2.2" fill="#e9e4da"/>
<!-- table -->
<rect x="926" y="367.5" width="60" height="1" fill="#858585"/>
<path d="M954.4 368.6 H960.6 C960 374 958.6 377 958.9 381 C959.2 385 960.8 388 961 392 H954 C954.2 388 955.8 385 956.1 381 C956.4 377 955 374 954.4 368.6 Z" fill="#474747"/>
<!-- chair 1 -->
<path d="M917 378 C915 366 916.6 358.6 921 358.6 H936.4 C940.6 358.6 942 366 939.6 378" fill="none" stroke="#f4f6f2" stroke-width="2.2"/>
<rect x="923.4" y="359.6" width="9.6" height="19" fill="#dfe3dd"/><rect x="923.4" y="359.6" width="2.6" height="19" fill="#b9bdb7"/>
<rect x="917" y="379.2" width="23.6" height="1.6" fill="#8b8f89"/>
<path d="M919.6 381 L918.6 392 M937.8 381 L938.8 392" stroke="#b8bcb6" stroke-width="1.4"/>
<!-- chair 2 -->
<path d="M973.4 378 C971.4 366 973 358.6 977.4 358.6 H990" fill="none" stroke="#f4f6f2" stroke-width="2.2"/>
<rect x="979.6" y="359.6" width="6" height="19" fill="#dfe3dd"/>
<rect x="973.4" y="379.2" width="14" height="1.6" fill="#8b8f89"/>
<path d="M976 381 L975 392" stroke="#b8bcb6" stroke-width="1.4"/>
</svg></div>
<div class="a" style="left:56.1px;top:353.65px;font-size:29px;line-height:1;color:#3f6228;white-space:nowrap;letter-spacing:0.177px;">Еженедельные дела по дому</div>
<div class="a " style="left:244px;top:404px;width:144px;height:35px;background:#426429;"></div>
<div class="a " style="left:244px;top:440px;width:144px;height:70.5px;background:#86a570;"></div>
<div class="a " style="left:244px;top:439px;width:144px;height:1.2px;background:#c3cfb8;"></div>
<div class="a " style="left:244px;top:475px;width:144px;height:1px;background:#b4c4a6;"></div>
<div class="a " style="left:244px;top:510px;width:144px;height:3px;background:#c6c6c6;"></div>
<div class="a " style="left:244px;top:511px;width:144px;height:28px;background:#9bae8c;"></div>
<div class="a " style="left:244px;top:510px;width:144px;height:3px;background:#c6c6c6;"></div>
<div class="a " style="left:244px;top:539px;width:144px;height:28px;background:#b1bfa9;"></div>
<div class="a " style="left:244px;top:538.5px;width:144px;height:1px;background:#c2cbbb;"></div>
<div class="a " style="left:244px;top:567px;width:144px;height:28px;background:#9bae8c;"></div>
<div class="a " style="left:244px;top:566.5px;width:144px;height:1px;background:#c2cbbb;"></div>
<div class="a " style="left:244px;top:595px;width:144px;height:28px;background:#b1bfa9;"></div>
<div class="a " style="left:244px;top:594.5px;width:144px;height:1px;background:#c2cbbb;"></div>
<div class="a " style="left:244px;top:623px;width:144px;height:28px;background:#9bae8c;"></div>
<div class="a " style="left:244px;top:622.5px;width:144px;height:1px;background:#c2cbbb;"></div>
<div class="a " style="left:244px;top:651px;width:144px;height:28px;background:#b1bfa9;"></div>
<div class="a " style="left:244px;top:650.5px;width:144px;height:1px;background:#c2cbbb;"></div>
<div class="a " style="left:244px;top:679px;width:144px;height:28px;background:#9bae8c;"></div>
<div class="a " style="left:244px;top:678.5px;width:144px;height:1px;background:#c2cbbb;"></div>
<div class="a " style="left:244px;top:707px;width:144px;height:28px;background:#b1bfa9;"></div>
<div class="a " style="left:244px;top:706.5px;width:144px;height:1px;background:#c2cbbb;"></div>
<div class="a " style="left:244px;top:735px;width:144px;height:5px;background:#9bae8c;"></div>
<div class="a " style="left:244px;top:734.5px;width:144px;height:1px;background:#c2cbbb;"></div>
<div class="a " style="left:315px;top:476px;width:1px;height:264px;background:#bcc8b3;"></div>
<div class="a" style="left:305.35px;top:414.33px;font-size:16.5px;line-height:1;color:#c6d4bb;white-space:nowrap;letter-spacing:0.075px;font-weight:bold;">Пн</div>
<div class="a" style="left:274.8px;top:448.86px;font-size:15.4px;line-height:1;color:#222;white-space:nowrap;letter-spacing:0.591px;-webkit-text-stroke:.45px #222;">23.03.2020</div>
<div class="a" style="left:267.0px;top:486.33px;font-size:15.2px;line-height:1;color:#1e2a16;white-space:nowrap;letter-spacing:0.550px;">Кто</div>
<div class="a" style="left:327.7px;top:486.33px;font-size:15.2px;line-height:1;color:#3c5927;white-space:nowrap;letter-spacing:0.333px;">Готово</div>
<div class="a " style="left:391px;top:404px;width:143px;height:35px;background:#426429;"></div>
<div class="a " style="left:391px;top:440px;width:143px;height:70.5px;background:#86a570;"></div>
<div class="a " style="left:391px;top:439px;width:143px;height:1.2px;background:#c3cfb8;"></div>
<div class="a " style="left:391px;top:475px;width:143px;height:1px;background:#b4c4a6;"></div>
<div class="a " style="left:391px;top:510px;width:143px;height:3px;background:#c6c6c6;"></div>
<div class="a " style="left:391px;top:511px;width:143px;height:28px;background:#9bae8c;"></div>
<div class="a " style="left:391px;top:510px;width:143px;height:3px;background:#c6c6c6;"></div>
<div class="a " style="left:391px;top:539px;width:143px;height:28px;background:#b1bfa9;"></div>
<div class="a " style="left:391px;top:538.5px;width:143px;height:1px;background:#c2cbbb;"></div>
<div class="a " style="left:391px;top:567px;width:143px;height:28px;background:#9bae8c;"></div>
<div class="a " style="left:391px;top:566.5px;width:143px;height:1px;background:#c2cbbb;"></div>
<div class="a " style="left:391px;top:595px;width:143px;height:28px;background:#b1bfa9;"></div>
<div class="a " style="left:391px;top:594.5px;width:143px;height:1px;background:#c2cbbb;"></div>
<div class="a " style="left:391px;top:623px;width:143px;height:28px;background:#9bae8c;"></div>
<div class="a " style="left:391px;top:622.5px;width:143px;height:1px;background:#c2cbbb;"></div>
<div class="a " style="left:391px;top:651px;width:143px;height:28px;background:#b1bfa9;"></div>
<div class="a " style="left:391px;top:650.5px;width:143px;height:1px;background:#c2cbbb;"></div>
<div class="a " style="left:391px;top:679px;width:143px;height:28px;background:#9bae8c;"></div>
<div class="a " style="left:391px;top:678.5px;width:143px;height:1px;background:#c2cbbb;"></div>
<div class="a " style="left:391px;top:707px;width:143px;height:28px;background:#b1bfa9;"></div>
<div class="a " style="left:391px;top:706.5px;width:143px;height:1px;background:#c2cbbb;"></div>
<div class="a " style="left:391px;top:735px;width:143px;height:5px;background:#9bae8c;"></div>
<div class="a " style="left:391px;top:734.5px;width:143px;height:1px;background:#c2cbbb;"></div>
<div class="a " style="left:462px;top:476px;width:1px;height:264px;background:#bcc8b3;"></div>
<div class="a" style="left:452.90000000000003px;top:414.33px;font-size:16.5px;line-height:1;color:#c6d4bb;white-space:nowrap;letter-spacing:1.021px;font-weight:bold;">Вт</div>
<div class="a" style="left:421.8px;top:448.86px;font-size:15.4px;line-height:1;color:#222;white-space:nowrap;letter-spacing:0.591px;-webkit-text-stroke:.45px #222;">24.03.2020</div>
<div class="a" style="left:414.0px;top:486.33px;font-size:15.2px;line-height:1;color:#1e2a16;white-space:nowrap;letter-spacing:0.550px;">Кто</div>
<div class="a" style="left:474.7px;top:486.33px;font-size:15.2px;line-height:1;color:#3c5927;white-space:nowrap;letter-spacing:0.333px;">Готово</div>
<div class="a " style="left:537px;top:404px;width:143px;height:35px;background:#426429;"></div>
<div class="a " style="left:537px;top:440px;width:143px;height:70.5px;background:#86a570;"></div>
<div class="a " style="left:537px;top:439px;width:143px;height:1.2px;background:#c3cfb8;"></div>
<div class="a " style="left:537px;top:475px;width:143px;height:1px;background:#b4c4a6;"></div>
<div class="a " style="left:537px;top:510px;width:143px;height:3px;background:#c6c6c6;"></div>
<div class="a " style="left:537px;top:511px;width:143px;height:28px;background:#9bae8c;"></div>
<div class="a " style="left:537px;top:510px;width:143px;height:3px;background:#c6c6c6;"></div>
<div class="a " style="left:537px;top:539px;width:143px;height:28px;background:#b1bfa9;"></div>
<div class="a " style="left:537px;top:538.5px;width:143px;height:1px;background:#c2cbbb;"></div>
<div class="a " style="left:537px;top:567px;width:143px;height:28px;background:#9bae8c;"></div>
<div class="a " style="left:537px;top:566.5px;width:143px;height:1px;background:#c2cbbb;"></div>
<div class="a " style="left:537px;top:595px;width:143px;height:28px;background:#b1bfa9;"></div>
<div class="a " style="left:537px;top:594.5px;width:143px;height:1px;background:#c2cbbb;"></div>
<div class="a " style="left:537px;top:623px;width:143px;height:28px;background:#9bae8c;"></div>
<div class="a " style="left:537px;top:622.5px;width:143px;height:1px;background:#c2cbbb;"></div>
<div class="a " style="left:537px;top:651px;width:143px;height:28px;background:#b1bfa9;"></div>
<div class="a " style="left:537px;top:650.5px;width:143px;height:1px;background:#c2cbbb;"></div>
<div class="a " style="left:537px;top:679px;width:143px;height:28px;background:#9bae8c;"></div>
<div class="a " style="left:537px;top:678.5px;width:143px;height:1px;background:#c2cbbb;"></div>
<div class="a " style="left:537px;top:707px;width:143px;height:28px;background:#b1bfa9;"></div>
<div class="a " style="left:537px;top:706.5px;width:143px;height:1px;background:#c2cbbb;"></div>
<div class="a " style="left:537px;top:735px;width:143px;height:5px;background:#9bae8c;"></div>
<div class="a " style="left:537px;top:734.5px;width:143px;height:1px;background:#c2cbbb;"></div>
<div class="a " style="left:608px;top:476px;width:1px;height:264px;background:#bcc8b3;"></div>
<div class="a" style="left:597.8px;top:414.33px;font-size:16.5px;line-height:1;color:#c6d4bb;white-space:nowrap;letter-spacing:1.005px;font-weight:bold;">Ср</div>
<div class="a" style="left:567.8px;top:448.86px;font-size:15.4px;line-height:1;color:#222;white-space:nowrap;letter-spacing:0.591px;-webkit-text-stroke:.45px #222;">25.03.2020</div>
<div class="a" style="left:560.0px;top:486.33px;font-size:15.2px;line-height:1;color:#1e2a16;white-space:nowrap;letter-spacing:0.550px;">Кто</div>
<div class="a" style="left:620.7px;top:486.33px;font-size:15.2px;line-height:1;color:#3c5927;white-space:nowrap;letter-spacing:0.333px;">Готово</div>
<div class="a " style="left:683px;top:404px;width:143px;height:35px;background:#426429;"></div>
<div class="a " style="left:683px;top:440px;width:143px;height:70.5px;background:#86a570;"></div>
<div class="a " style="left:683px;top:439px;width:143px;height:1.2px;background:#c3cfb8;"></div>
<div class="a " style="left:683px;top:475px;width:143px;height:1px;background:#b4c4a6;"></div>
<div class="a " style="left:683px;top:510px;width:143px;height:3px;background:#c6c6c6;"></div>
<div class="a " style="left:683px;top:511px;width:143px;height:28px;background:#9bae8c;"></div>
<div class="a " style="left:683px;top:510px;width:143px;height:3px;background:#c6c6c6;"></div>
<div class="a " style="left:683px;top:539px;width:143px;height:28px;background:#b1bfa9;"></div>
<div class="a " style="left:683px;top:538.5px;width:143px;height:1px;background:#c2cbbb;"></div>
<div class="a " style="left:683px;top:567px;width:143px;height:28px;background:#9bae8c;"></div>
<div class="a " style="left:683px;top:566.5px;width:143px;height:1px;background:#c2cbbb;"></div>
<div class="a " style="left:683px;top:595px;width:143px;height:28px;background:#b1bfa9;"></div>
<div class="a " style="left:683px;top:594.5px;width:143px;height:1px;background:#c2cbbb;"></div>
<div class="a " style="left:683px;top:623px;width:143px;height:28px;background:#9bae8c;"></div>
<div class="a " style="left:683px;top:622.5px;width:143px;height:1px;background:#c2cbbb;"></div>
<div class="a " style="left:683px;top:651px;width:143px;height:28px;background:#b1bfa9;"></div>
<div class="a " style="left:683px;top:650.5px;width:143px;height:1px;background:#c2cbbb;"></div>
<div class="a " style="left:683px;top:679px;width:143px;height:28px;background:#9bae8c;"></div>
<div class="a " style="left:683px;top:678.5px;width:143px;height:1px;background:#c2cbbb;"></div>
<div class="a " style="left:683px;top:707px;width:143px;height:28px;background:#b1bfa9;"></div>
<div class="a " style="left:683px;top:706.5px;width:143px;height:1px;background:#c2cbbb;"></div>
<div class="a " style="left:683px;top:735px;width:143px;height:5px;background:#9bae8c;"></div>
<div class="a " style="left:683px;top:734.5px;width:143px;height:1px;background:#c2cbbb;"></div>
<div class="a " style="left:754px;top:476px;width:1px;height:264px;background:#bcc8b3;"></div>
<div class="a" style="left:744.9499999999999px;top:414.33px;font-size:16.5px;line-height:1;color:#c6d4bb;white-space:nowrap;letter-spacing:1.025px;font-weight:bold;">Чт</div>
<div class="a" style="left:713.8px;top:448.86px;font-size:15.4px;line-height:1;color:#222;white-space:nowrap;letter-spacing:0.591px;-webkit-text-stroke:.45px #222;">26.03.2020</div>
<div class="a" style="left:706.0px;top:486.33px;font-size:15.2px;line-height:1;color:#1e2a16;white-space:nowrap;letter-spacing:0.550px;">Кто</div>
<div class="a" style="left:766.7px;top:486.33px;font-size:15.2px;line-height:1;color:#3c5927;white-space:nowrap;letter-spacing:0.333px;">Готово</div>
<div class="a " style="left:829px;top:404px;width:143px;height:35px;background:#426429;"></div>
<div class="a " style="left:829px;top:440px;width:143px;height:70.5px;background:#86a570;"></div>
<div class="a " style="left:829px;top:439px;width:143px;height:1.2px;background:#c3cfb8;"></div>
<div class="a " style="left:829px;top:475px;width:143px;height:1px;background:#b4c4a6;"></div>
<div class="a " style="left:829px;top:510px;width:143px;height:3px;background:#c6c6c6;"></div>
<div class="a " style="left:829px;top:511px;width:143px;height:28px;background:#9bae8c;"></div>
<div class="a " style="left:829px;top:510px;width:143px;height:3px;background:#c6c6c6;"></div>
<div class="a " style="left:829px;top:539px;width:143px;height:28px;background:#b1bfa9;"></div>
<div class="a " style="left:829px;top:538.5px;width:143px;height:1px;background:#c2cbbb;"></div>
<div class="a " style="left:829px;top:567px;width:143px;height:28px;background:#9bae8c;"></div>
<div class="a " style="left:829px;top:566.5px;width:143px;height:1px;background:#c2cbbb;"></div>
<div class="a " style="left:829px;top:595px;width:143px;height:28px;background:#b1bfa9;"></div>
<div class="a " style="left:829px;top:594.5px;width:143px;height:1px;background:#c2cbbb;"></div>
<div class="a " style="left:829px;top:623px;width:143px;height:28px;background:#9bae8c;"></div>
<div class="a " style="left:829px;top:622.5px;width:143px;height:1px;background:#c2cbbb;"></div>
<div class="a " style="left:829px;top:651px;width:143px;height:28px;background:#b1bfa9;"></div>
<div class="a " style="left:829px;top:650.5px;width:143px;height:1px;background:#c2cbbb;"></div>
<div class="a " style="left:829px;top:679px;width:143px;height:28px;background:#9bae8c;"></div>
<div class="a " style="left:829px;top:678.5px;width:143px;height:1px;background:#c2cbbb;"></div>
<div class="a " style="left:829px;top:707px;width:143px;height:28px;background:#b1bfa9;"></div>
<div class="a " style="left:829px;top:706.5px;width:143px;height:1px;background:#c2cbbb;"></div>
<div class="a " style="left:829px;top:735px;width:143px;height:5px;background:#9bae8c;"></div>
<div class="a " style="left:829px;top:734.5px;width:143px;height:1px;background:#c2cbbb;"></div>
<div class="a " style="left:900px;top:476px;width:1px;height:264px;background:#bcc8b3;"></div>
<div class="a" style="left:890.8499999999999px;top:414.33px;font-size:16.5px;line-height:1;color:#c6d4bb;white-space:nowrap;letter-spacing:0.959px;font-weight:bold;">Пт</div>
<div class="a" style="left:859.8px;top:448.86px;font-size:15.4px;line-height:1;color:#222;white-space:nowrap;letter-spacing:0.591px;-webkit-text-stroke:.45px #222;">27.03.2020</div>
<div class="a" style="left:852.0px;top:486.33px;font-size:15.2px;line-height:1;color:#1e2a16;white-space:nowrap;letter-spacing:0.550px;">Кто</div>
<div class="a" style="left:912.7px;top:486.33px;font-size:15.2px;line-height:1;color:#3c5927;white-space:nowrap;letter-spacing:0.333px;">Готово</div>
<div class="a " style="left:975px;top:404px;width:9px;height:35px;background:#426429;"></div>
<div class="a " style="left:975px;top:440px;width:9px;height:70.5px;background:#86a570;"></div>
<div class="a " style="left:975px;top:439px;width:9px;height:1.2px;background:#c3cfb8;"></div>
<div class="a " style="left:975px;top:475px;width:9px;height:1px;background:#b4c4a6;"></div>
<div class="a " style="left:975px;top:510px;width:9px;height:3px;background:#c6c6c6;"></div>
<div class="a " style="left:975px;top:511px;width:9px;height:28px;background:#9bae8c;"></div>
<div class="a " style="left:975px;top:510px;width:9px;height:3px;background:#c6c6c6;"></div>
<div class="a " style="left:975px;top:539px;width:9px;height:28px;background:#b1bfa9;"></div>
<div class="a " style="left:975px;top:538.5px;width:9px;height:1px;background:#c2cbbb;"></div>
<div class="a " style="left:975px;top:567px;width:9px;height:28px;background:#9bae8c;"></div>
<div class="a " style="left:975px;top:566.5px;width:9px;height:1px;background:#c2cbbb;"></div>
<div class="a " style="left:975px;top:595px;width:9px;height:28px;background:#b1bfa9;"></div>
<div class="a " style="left:975px;top:594.5px;width:9px;height:1px;background:#c2cbbb;"></div>
<div class="a " style="left:975px;top:623px;width:9px;height:28px;background:#9bae8c;"></div>
<div class="a " style="left:975px;top:622.5px;width:9px;height:1px;background:#c2cbbb;"></div>
<div class="a " style="left:975px;top:651px;width:9px;height:28px;background:#b1bfa9;"></div>
<div class="a " style="left:975px;top:650.5px;width:9px;height:1px;background:#c2cbbb;"></div>
<div class="a " style="left:975px;top:679px;width:9px;height:28px;background:#9bae8c;"></div>
<div class="a " style="left:975px;top:678.5px;width:9px;height:1px;background:#c2cbbb;"></div>
<div class="a " style="left:975px;top:707px;width:9px;height:28px;background:#b1bfa9;"></div>
<div class="a " style="left:975px;top:706.5px;width:9px;height:1px;background:#c2cbbb;"></div>
<div class="a " style="left:975px;top:735px;width:9px;height:5px;background:#9bae8c;"></div>
<div class="a " style="left:975px;top:734.5px;width:9px;height:1px;background:#c2cbbb;"></div>
<div class="a " style="left:45px;top:539px;width:197px;height:28px;background:#b1bfa9;"></div>
<div class="a " style="left:45px;top:567px;width:197px;height:28px;background:#9bae8c;"></div>
<div class="a " style="left:45px;top:566.5px;width:197px;height:1px;background:#c2cbbb;"></div>
<div class="a " style="left:45px;top:595px;width:197px;height:28px;background:#b1bfa9;"></div>
<div class="a " style="left:45px;top:594.5px;width:197px;height:1px;background:#c2cbbb;"></div>
<div class="a " style="left:45px;top:623px;width:197px;height:28px;background:#9bae8c;"></div>
<div class="a " style="left:45px;top:622.5px;width:197px;height:1px;background:#c2cbbb;"></div>
<div class="a " style="left:45px;top:651px;width:197px;height:28px;background:#b1bfa9;"></div>
<div class="a " style="left:45px;top:650.5px;width:197px;height:1px;background:#c2cbbb;"></div>
<div class="a " style="left:45px;top:679px;width:197px;height:28px;background:#9bae8c;"></div>
<div class="a " style="left:45px;top:678.5px;width:197px;height:1px;background:#c2cbbb;"></div>
<div class="a " style="left:45px;top:707px;width:197px;height:28px;background:#b1bfa9;"></div>
<div class="a " style="left:45px;top:706.5px;width:197px;height:1px;background:#c2cbbb;"></div>
<div class="a " style="left:45px;top:735px;width:197px;height:5px;background:#9bae8c;"></div>
<div class="a " style="left:45px;top:734.5px;width:197px;height:1px;background:#c2cbbb;"></div>
<div class="a" style="left:63.4px;top:576.24px;font-size:12px;line-height:1;color:#1a1a1a;white-space:nowrap;letter-spacing:0.167px;">Вынести мусор</div>
<div class="a" style="left:63.4px;top:604.24px;font-size:12px;line-height:1;color:#1a1a1a;white-space:nowrap;letter-spacing:0.372px;">Помыть посуду</div>
<div class="a" style="left:63.4px;top:632.24px;font-size:12px;line-height:1;color:#1a1a1a;white-space:nowrap;letter-spacing:0.411px;">Протереть пыль</div>
<div class="a" style="left:63.4px;top:660.24px;font-size:12px;line-height:1;color:#1a1a1a;white-space:nowrap;letter-spacing:0.305px;">Подмести</div>
<div class="a" style="left:63.4px;top:688.24px;font-size:12px;line-height:1;color:#1a1a1a;white-space:nowrap;letter-spacing:0.164px;">Пропылесосить</div>
<div class="a" style="left:63.4px;top:716.24px;font-size:12px;line-height:1;color:#1a1a1a;white-space:nowrap;letter-spacing:0.288px;">Вымыть полы</div>
<div class="a " style="left:39px;top:409px;width:203px;height:153px;background:#ffffe1;border:1px solid #6a6a6a;box-shadow:1px 1px 2px rgba(0,0,0,.25);"></div>
<div class="a" style="left:44.6px;top:414.90px;font-size:11.7px;line-height:1;color:#404040;white-space:nowrap;letter-spacing:-0.101px;font-weight:bold;">Еженедельные дела по дому</div>
<div class="a" style="left:46.5px;top:443.77px;font-size:11.5px;line-height:1;color:#4a4a4a;white-space:nowrap;letter-spacing:-0.03px;">Введите дату начала в ячейку C3.</div>
<div class="a" style="left:46.5px;top:458.80px;font-size:11.5px;line-height:1;color:#4a4a4a;white-space:nowrap;letter-spacing:0.04px;">Для каждого дня в таблице есть</div>
<div class="a" style="left:46.5px;top:473.83px;font-size:11.5px;line-height:1;color:#4a4a4a;white-space:nowrap;letter-spacing:0.04px;">столбец «Кто» для назначения</div>
<div class="a" style="left:46.5px;top:488.86px;font-size:11.5px;line-height:1;color:#4a4a4a;white-space:nowrap;letter-spacing:0.02px;">каждого дела. Чтобы</div>
<div class="a" style="left:46.5px;top:503.89px;font-size:11.5px;line-height:1;color:#4a4a4a;white-space:nowrap;letter-spacing:0.17px;">отметить каждую задачу</div>
<div class="a" style="left:46.5px;top:518.92px;font-size:11.5px;line-height:1;color:#4a4a4a;white-space:nowrap;letter-spacing:0.22px;">завершенную, дважды щелкните</div>
<div class="a" style="left:46.5px;top:533.95px;font-size:11.5px;line-height:1;color:#4a4a4a;white-space:nowrap;letter-spacing:0.40px;">по ячейкам в столбце</div>
<div class="a " style="left:984px;top:241px;width:20px;height:499px;background:#e6e6e6;"></div>
<div class="a " style="left:988px;top:242px;width:15px;height:15px;background:#fff;border:1px solid #bdbdbd;"></div>
<svg class="a" style="left:991.2px;top:246px;" width="9" height="7" viewBox="0 0 9 7"><path d="M1 5.6 L4.5 1.4 L8 5.6 Z" fill="#666"/></svg>
<div class="a " style="left:988px;top:257.5px;width:15px;height:378.2px;background:#fff;border:1px solid #bdbdbd;"></div>
<div class="a " style="left:988px;top:635.7px;width:15px;height:90px;background:#dadada;"></div>
<div class="a " style="left:988px;top:725.7px;width:15px;height:15.1px;background:#fff;border:1px solid #bdbdbd;"></div>
<svg class="a" style="left:991.2px;top:730px;" width="9" height="7" viewBox="0 0 9 7"><path d="M1 1.4 L4.5 5.6 L8 1.4 Z" fill="#666"/></svg>
<div class="a " style="left:33px;top:740px;width:951px;height:1px;background:#a0a0a0;"></div>
<div class="a " style="left:983px;top:242px;width:1px;height:499px;background:#9c9c9c;"></div>
<svg class="a" style="left:58px;top:749px;" width="8" height="10" viewBox="0 0 8 10"><path d="M6 1.4 L1.6 5 L6 8.6 Z" fill="#c0c0c0"/></svg>
<svg class="a" style="left:87px;top:749px;" width="8" height="10" viewBox="0 0 8 10"><path d="M2 1.4 L6.4 5 L2 8.6 Z" fill="#c0c0c0"/></svg>
<div class="a " style="left:133px;top:740px;width:155px;height:25px;background:#fff;border-bottom:2px solid #217346;border-left:1px solid #9c9c9c;border-right:1px solid #c8c8c8;"></div>
<div class="a" style="left:145px;top:746.80px;font-size:13px;line-height:1;color:#1e6e42;white-space:nowrap;letter-spacing:-0.158px;font-weight:bold;">Еженедельные дела</div>
<div class="a" style="left:303px;top:746.80px;font-size:13px;line-height:1;color:#333;white-space:nowrap;letter-spacing:0.091px;">Личный бюджет</div>
<div class="a " style="left:418px;top:744px;width:1.3px;height:20px;background:#8e8e8e;"></div>
<div class="a" style="left:433.3px;top:747.40px;font-size:13px;line-height:1;color:#444;white-space:nowrap;letter-spacing:-0.242px;">Lumpics.ru</div>
<div class="a " style="left:509px;top:744px;width:1.3px;height:20px;background:#8e8e8e;"></div>
<svg class="a" style="left:541px;top:743.6px;" width="20" height="20" viewBox="0 0 20 20"><g fill="none" stroke="#666"><circle cx="10" cy="10" r="7.4" stroke-width="1.2"/><path d="M10 6 V14 M6 10 H14" stroke-width="1.6"/></g></svg>
<div class="a " style="left:616.5px;top:749px;width:2px;height:2px;background:#a6a6a6;"></div>
<div class="a " style="left:616.5px;top:753px;width:2px;height:2px;background:#a6a6a6;"></div>
<div class="a " style="left:616.5px;top:757px;width:2px;height:2px;background:#a6a6a6;"></div>
<div class="a " style="left:634px;top:747px;width:15.5px;height:15px;background:#fff;border:1px solid #b8b8b8;"></div>
<svg class="a" style="left:638px;top:750px;" width="7" height="9" viewBox="0 0 7 9"><path d="M5.4 1 L1.4 4.5 L5.4 8 Z" fill="#666"/></svg>
<div class="a " style="left:649px;top:747px;width:218.5px;height:15px;background:#fff;border:1px solid #b8b8b8;"></div>
<div class="a " style="left:867.5px;top:747px;width:103px;height:15px;background:#dadada;"></div>
<div class="a " style="left:970px;top:747px;width:15px;height:15px;background:#fff;border:1px solid #b8b8b8;"></div>
<svg class="a" style="left:974.2px;top:750px;" width="7" height="9" viewBox="0 0 7 9"><path d="M1.4 1 L5.6 4.5 L1.4 8 Z" fill="#555"/></svg>
<svg class="a" style="left:40px;top:772px;" width="18" height="15" viewBox="0 0 18 15"><g fill="none" stroke="#3a3a3a" stroke-width="1.05"><path d="M1.5 1.6 H14.8 M1.5 3.4 H14.8 M1.5 1.6 V12.6 H7"/><path d="M3.6 6 H7.2 M3.6 8.2 H6.4 M3.6 10.4 H6"/>
<circle cx="10.8" cy="9.6" r="4.3" fill="#f3f2f1"/></g><circle cx="10.8" cy="9.6" r="2.2" fill="#3a3a3a"/></svg>
<div class="a" style="left:371.6px;top:773.46px;font-size:10.8px;line-height:1;color:#444;white-space:nowrap;letter-spacing:0.162px;">Среднее: 34157,11111</div>
<div class="a" style="left:500.9px;top:773.46px;font-size:10.8px;line-height:1;color:#444;white-space:nowrap;letter-spacing:0.307px;">Количество: 52</div>
<div class="a" style="left:597.4px;top:773.46px;font-size:10.8px;line-height:1;color:#444;white-space:nowrap;letter-spacing:-0.081px;">Сумма: 307414</div>
<div class="a " style="left:691.5px;top:769px;width:40px;height:21px;background:#c8c6c4;"></div>
<svg class="a" style="left:704px;top:771px;" width="15" height="15" viewBox="0 0 15 15"><g fill="none" stroke="#222" stroke-width="1.1"><rect x="1.5" y="1.5" width="12" height="12"/><path d="M5.5 1.5 V13.5 M9.5 1.5 V13.5 M1.5 5.5 H13.5 M1.5 9.5 H13.5"/></g></svg>
<svg class="a" style="left:744px;top:771px;" width="16" height="15" viewBox="0 0 16 15"><g fill="none" stroke="#444" stroke-width="1.1"><rect x="1.5" y="1.5" width="13" height="12"/><rect x="4.5" y="3.8" width="7" height="7.4"/><path d="M6 6 H10 M6 7.6 H10 M6 9.2 H10" stroke-width=".8"/></g></svg>
<svg class="a" style="left:784px;top:771px;" width="16" height="15" viewBox="0 0 16 15"><g fill="none" stroke="#444" stroke-width="1.1"><rect x="1.5" y="1.5" width="13" height="12"/><path d="M5.5 1.5 V7.5 H10 V1.5 M1.5 7.5 H5.5"/></g></svg>
<div class="a " style="left:817.5px;top:778.5px;width:8.5px;height:1px;background:#444;"></div>
<div class="a " style="left:830.5px;top:778.5px;width:99px;height:1px;background:#9a9a9a;"></div>
<div class="a " style="left:879.3px;top:773px;width:4.6px;height:11px;background:#666;"></div>
<div class="a " style="left:935px;top:778.5px;width:9px;height:1px;background:#444;"></div>
<div class="a " style="left:939px;top:774.5px;width:1px;height:9px;background:#444;"></div>
<div class="a" style="left:957.5px;top:773.46px;font-size:10.8px;line-height:1;color:#444;white-space:nowrap;letter-spacing:-0.260px;">100</div>
<div class="a" style="left:978.6px;top:773.46px;font-size:10.8px;line-height:1;color:#444;white-space:nowrap;">%</div>
<div class="a " style="left:164px;top:465px;width:240.5px;height:289px;background:#fff;border:1px solid #c8c8c8;box-shadow:1px 1px 3px rgba(0,0,0,.32);"></div>
<div class="a" style="left:202.1px;top:475.04px;font-size:12px;line-height:1;color:#1e1e1e;white-space:nowrap;letter-spacing:-0.387px;">Вставит<u>ь</u>...</div>
<div class="a" style="left:202.1px;top:503.04px;font-size:12px;line-height:1;color:#1e1e1e;white-space:nowrap;letter-spacing:-0.369px;"><u>У</u>далить</div>
<div class="a" style="left:202.1px;top:531.04px;font-size:12px;line-height:1;color:#1e1e1e;white-space:nowrap;letter-spacing:-0.081px;">Пере<u>и</u>меновать</div>
<div class="a" style="left:202.1px;top:559.04px;font-size:12px;line-height:1;color:#1e1e1e;white-space:nowrap;letter-spacing:-0.055px;"><u>П</u>ереместить или скопировать...</div>
<div class="a" style="left:202.1px;top:587.04px;font-size:12px;line-height:1;color:#1e1e1e;white-space:nowrap;letter-spacing:0.110px;">Пр<u>о</u>смотреть код</div>
<div class="a" style="left:202.1px;top:615.04px;font-size:12px;line-height:1;color:#1e1e1e;white-space:nowrap;letter-spacing:-0.044px;">Защитить <u>л</u>ист...</div>
<div class="a" style="left:202.1px;top:643.04px;font-size:12px;line-height:1;color:#1e1e1e;white-space:nowrap;letter-spacing:-0.050px;"><u>Ц</u>вет ярлычка</div>
<div class="a" style="left:202.1px;top:702.04px;font-size:12px;line-height:1;color:#b8b8b8;white-space:nowrap;letter-spacing:-0.251px;">П<u>о</u>казать...</div>
<div class="a" style="left:202.1px;top:733.04px;font-size:12px;line-height:1;color:#1e1e1e;white-space:nowrap;letter-spacing:-0.251px;"><u>В</u>ыделить все листы</div>
<svg class="a" style="left:388px;top:641px;" width="9" height="13" viewBox="0 0 9 13"><path d="M2 1.6 L7 6.5 L2 11.4" fill="none" stroke="#444" stroke-width="1.2"/></svg>
<div class="a " style="left:197px;top:723px;width:206px;height:1px;background:#e1e1e1;"></div>
<div class="a " style="left:197px;top:664px;width:206px;height:1px;background:#e1e1e1;"></div>
<svg class="a" style="left:175.9px;top:500.1px;" width="19.3" height="17.2" viewBox="0 0 18 18" preserveAspectRatio="none"><g fill="none" stroke="#444" stroke-width="1"><path d="M1.5 1.5 H15.5 V9 M1.5 1.5 V14.5 H9"/><path d="M1.5 5.2 H15.5 M1.5 8.8 H13 M1.5 12 H9 M6 1.5 V14.5 M10.8 1.5 V9"/></g>
<path d="M9.6 9.6 L16.4 16.4 M16.4 9.6 L9.6 16.4" stroke="#e8383e" stroke-width="1.4"/></svg>
<svg class="a" style="left:175.9px;top:528.1px;" width="19.3" height="17.2" viewBox="0 0 18 18" preserveAspectRatio="none"><g fill="none" stroke="#444" stroke-width="1"><path d="M1.5 1.5 H15.5 V4.6 M1.5 1.5 V14.5 H7"/><path d="M1.5 3.2 H15.5" stroke-width="2"/><path d="M1.5 6.6 H12 M1.5 10 H8.6 M1.5 13 H7 M6 4 V14.5 M10.8 4 V8"/></g>
<path d="M15.2 5.6 L17 7.4 L10.4 14.4 L7.6 15.6 L8.6 12.6 Z" fill="#3a8ede" stroke="#1f6fbf" stroke-width=".8" stroke-linejoin="round"/></svg>
<svg class="a" style="left:175.9px;top:584.1px;" width="19.3" height="17.2" viewBox="0 0 18 18" preserveAspectRatio="none"><g fill="none" stroke="#444" stroke-width="1"><path d="M1.5 1.5 H15.5 V8 M1.5 1.5 V14.5 H8.4"/><path d="M1.5 3.6 H15.5"/><path d="M3.6 6.4 H5 M3.6 8.6 H5 M3.6 10.8 H5 M6.4 6.4 H8" stroke-dasharray="1 1"/></g>
<circle cx="11.2" cy="10.2" r="3.3" fill="#d4e8fa" stroke="#2b88d8" stroke-width="1.2"/><path d="M13.6 12.8 L17 16.4" stroke="#2b88d8" stroke-width="1.5"/></svg>
<svg class="a" style="left:175.9px;top:612.1px;" width="19.3" height="17.2" viewBox="0 0 18 18" preserveAspectRatio="none"><g fill="none" stroke="#444" stroke-width="1"><path d="M1.5 1.5 H15.5 V7 M1.5 1.5 V14.5 H9"/><path d="M1.5 5.2 H15.5 M1.5 8.8 H10 M1.5 12 H9 M6 1.5 V14.5 M10.8 1.5 V7.6"/></g>
<path d="M11.6 10.8 V9.2 C11.6 6.8 15 6.8 15 9.2 V10.8" fill="none" stroke="#e8812d" stroke-width="1.2"/><rect x="10.2" y="10.8" width="6.4" height="5.4" fill="#fde2c4" stroke="#e8812d" stroke-width="1.1"/></svg>
<div class="a " style="left:160.2px;top:660.6px;width:247.8px;height:37.8px;border-radius:10px;background:#fff;box-shadow:0 0 2px 1px rgba(255,255,255,.9),1px 3px 6px 1px rgba(0,0,0,.4);"></div>
<div class="a " style="left:161.4px;top:661.8px;width:245.4px;height:35.4px;background:#d1cfcd;border:3px solid #fb0d0d;border-radius:9px;box-shadow:inset 0 0 0 1.2px rgba(255,255,255,.95),inset 1px 2px 4px 2px rgba(40,40,40,.62),inset -1px -1px 3px 1px rgba(60,60,60,.4);"></div>
<div class="a" style="left:202.1px;top:674.04px;font-size:12px;line-height:1;color:#1e1e1e;white-space:nowrap;letter-spacing:-0.093px;">Скр<u>ы</u>ть</div>
</body></html>
